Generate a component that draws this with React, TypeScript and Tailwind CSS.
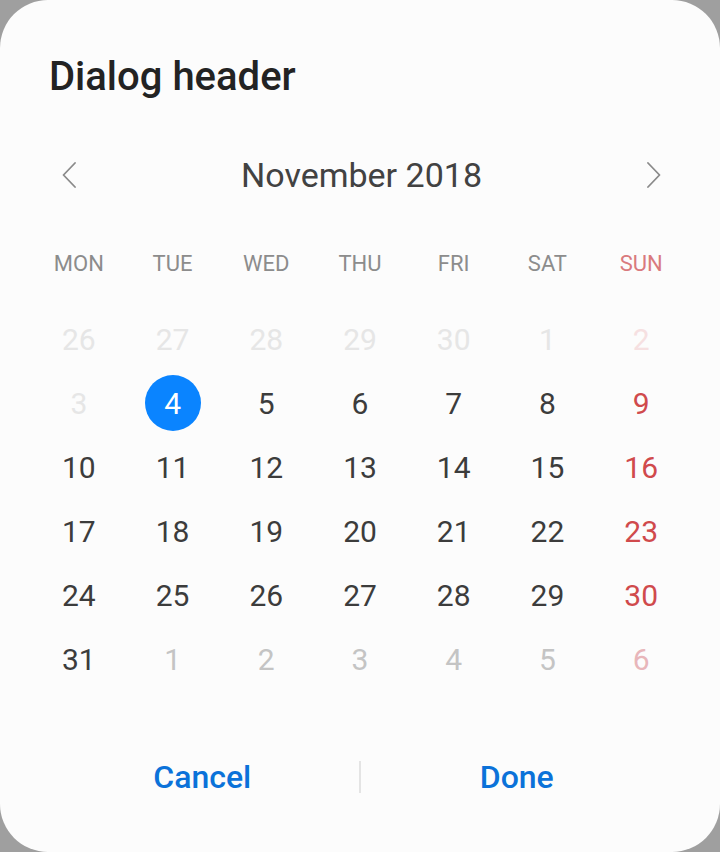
import React from 'react';

type Day = {
  readonly label: number;
  readonly kind: 'prev' | 'cur' | 'next';
};

const WEEKDAYS = ['MON', 'TUE', 'WED', 'THU', 'FRI', 'SAT', 'SUN'];

function buildDays(): Day[] {
  const days: Day[] = [];
  [26, 27, 28, 29, 30, 1, 2, 3].forEach(d => days.push({ label: d, kind: 'prev' }));
  for (let d = 4; d <= 31; d++) days.push({ label: d, kind: 'cur' });
  for (let d = 1; d <= 6; d++) days.push({ label: d, kind: 'next' });
  return days;
}

function dayColor(day: Day, isSunday: boolean): string {
  if (day.kind === 'prev') return isSunday ? 'text-[#f6e0e1]' : 'text-[#e6e6e6]';
  if (day.kind === 'next') return isSunday ? 'text-[#e8b6ba]' : 'text-[#c4c4c4]';
  return isSunday ? 'text-[#d04a4c]' : 'text-[#3c3c3c]';
}

function Chevron({ direction }: { readonly direction: 'left' | 'right' }) {
  return (
    <svg width="14" height="26" viewBox="0 0 14 26" fill="none" aria-hidden="true">
      <path
        d={direction === 'left' ? 'M13 1 L1.5 13 L13 25' : 'M1 1 L12.5 13 L1 25'}
        stroke="#8a8a8a"
        strokeWidth="1.8"
        strokeLinecap="round"
        strokeLinejoin="round"
      />
    </svg>
  );
}

export default function App() {
  const days = buildDays();
  const selected = 4;

  return (
    <div className="w-[720px] h-[852px] bg-[#9f9f9f] font-['Roboto',sans-serif]">
      <div className="w-full h-full bg-[#fcfcfc] rounded-[48px] flex flex-col">
        {/* Header */}
        <h1 className="pt-[53px] pl-[49px] text-[40px] leading-[48px] font-medium text-[#232323]">
          Dialog header
        </h1>

        {/* Month navigation */}
        <div className="mt-[54px] h-[40px] flex items-center justify-between pl-[62px] pr-[59px]">
          <button type="button" aria-label="Previous month" className="flex items-center">
            <Chevron direction="left" />
          </button>
          <span className="text-[34px] leading-[40px] text-[#424242]">November 2018</span>
          <button type="button" aria-label="Next month" className="flex items-center">
            <Chevron direction="right" />
          </button>
        </div>

        {/* Weekday labels */}
        <div className="mt-[55px] grid grid-cols-7 px-[32px]">
          {WEEKDAYS.map(w => (
            <div
              key={w}
              className={`text-center text-[22px] leading-[28px] ${
                w === 'SUN' ? 'text-[#d97a7e]' : 'text-[#8c8c8c]'
              }`}
            >
              {w}
            </div>
          ))}
        </div>

        {/* Days */}
        <div className="mt-[29px] grid grid-cols-7 px-[32px]">
          {days.map((day, i) => {
            const isSunday = i % 7 === 6;
            const isSelected = day.kind === 'cur' && day.label === selected;
            return (
              <div key={i} className="h-[64px] flex items-center justify-center">
                {isSelected ? (
                  <span className="w-[56px] h-[56px] rounded-full bg-[#0a84ff] text-white text-[30px] flex items-center justify-center">
                    {day.label}
                  </span>
                ) : (
                  <span className={`text-[30px] ${dayColor(day, isSunday)}`}>{day.label}</span>
                )}
              </div>
            );
          })}
        </div>

        {/* Actions */}
        <div className="mt-[66px] flex items-center pl-[46px] pr-[47px]">
          <button type="button" className="flex-1 text-center text-[32px] leading-[40px] font-medium text-[#0b72d9]">
            Cancel
          </button>
          <div className="w-[2px] h-[32px] bg-[#e4e4e4]" />
          <button type="button" className="flex-1 text-center text-[32px] leading-[40px] font-medium text-[#0b72d9]">
            Done
          </button>
        </div>
      </div>
    </div>
  );
}
